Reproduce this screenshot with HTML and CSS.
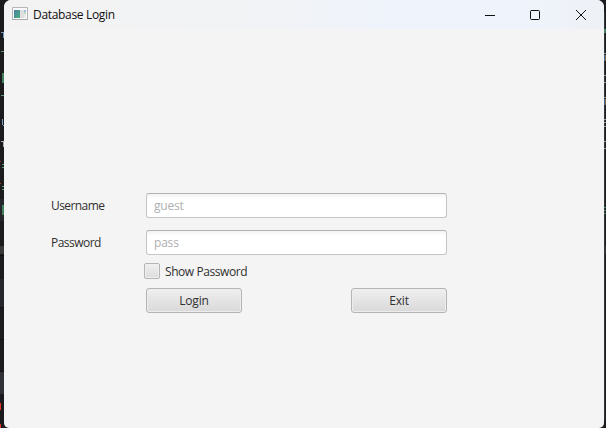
FILE: index.html
```html
<!DOCTYPE html>
<html lang="en">
<head>
<meta charset="utf-8">
<title>Database Login</title>
<link rel="stylesheet" href="styles.css">
</head>
<body>
<svg class="edge" width="4" height="428" viewBox="0 0 4 428" shape-rendering="crispEdges">
  <path fill="#1b1b1d" d="M0 0h4v428H0z"/>
  <path fill="#25262b" d="M0 199h4v22H0zM0 279h4v28H0z"/>
  <path fill="#393939" d="M0 246h4v8H0z"/>
  <path fill="#303137" d="M0 372h4v22H0z"/>
  <path fill="#101012" d="M0 255h4v1H0zM0 307h4v1H0zM0 339h4v1H0zM0 371h4v1H0z"/>
  <path fill="#7698bb" d="M1 32h3v1H1zM3 33h1v5H3zM2 119h1v6H2zM3 125h1v1H3z"/>
  <path fill="#a8b0b8" d="M1 141h3v1H1zM3 142h1v5H3z"/>
  <path fill="#5a9a76" d="M1 51h3v1H1zM1 95h3v1H1zM2 164h2v1H2zM2 167h2v1H2zM2 186h2v1H2zM2 189h2v1H2z"/>
  <path fill="#3f7d5b" d="M2 73h2v10H2zM2 205h2v10H2z"/>
  <path fill="#a33b28" d="M0 161h1v1H0zM0 183h1v1H0z"/>
  <path fill="#e33427" d="M0 403h1v7H0zM0 424h1v4H0z"/>
</svg>
<main class="window">
  <header class="titlebar">
    <svg class="app-icon" width="16" height="14" viewBox="0 0 16 14">
      <defs><linearGradient id="pane" x1="0" y1="0" x2="1" y2="1"><stop offset="0" stop-color="#4b7fa8"/><stop offset="1" stop-color="#4eab7c"/></linearGradient></defs>
      <path fill="#fafafa" stroke="#b4b6b9" d="M.5.5h15v12H.5z"/>
      <path fill="#a7abb0" d="M0 12h16v1H0z"/>
      <path fill="url(#pane)" d="M2 3h6v8H2z"/>
      <path fill="#dededf" d="M8 3h4v8H8z"/>
      <path fill="#9fbfdb" d="M12 3h2v2h-2z"/>
      <path fill="#b9dbc8" d="M12 5h2v2h-2z"/>
      <path fill="#e7e9ea" d="M12 7h2v4h-2z"/>
    </svg>
    <span class="title">Database Login</span>
    <svg class="controls" width="104" height="12" viewBox="0 0 104 12" fill="none" stroke="#111">
      <path d="M1 6.500h10M47 1.500h7.500a1 1 0 0 1 1 1v7a1 1 0 0 1-1 1H47.500a1 1 0 0 1-1-1v-7a1 1 0 0 1 1-1zM92 1l10 10M102 1L92 11"/>
    </svg>
  </header>
  <form class="login">
    <label class="label username" for="user">Username</label>
    <input class="field" id="user" type="text" placeholder="guest">
    <label class="label password" for="pass">Password</label>
    <input class="field" id="pass" type="password" placeholder="pass">
    <label class="show"><input class="check" type="checkbox"><span>Show Password</span></label>
    <div class="actions">
      <button class="button" type="button">Login</button>
      <button class="button" type="button">Exit</button>
    </div>
  </form>
</main>
<svg class="edge" width="2" height="428" viewBox="0 0 2 428" shape-rendering="crispEdges">
  <path fill="#1b1e21" d="M0 0h2v428H0z"/>
  <path fill="#34383d" d="M0 12h1v408H0z"/>
  <path fill="#34383b" d="M1 246h1v8H1z"/>
  <path fill="#4c7f60" d="M0 29h2v4H0zM0 207h2v1H0zM0 210h2v1H0zM0 213h2v1H0z"/>
  <path fill="#3e6595" d="M0 55h1v6H0zM0 99h1v6H0z"/>
  <path fill="#816346" d="M1 55h1v6H1zM1 99h1v6H1z"/>
  <path fill="#92979b" d="M0 53h2v1H0zM0 75h2v1H0zM0 82h2v1H0zM0 97h2v1H0zM0 119h2v1H0zM0 122h2v1H0zM0 126h2v1H0zM0 141h2v1H0zM0 148h2v1H0z"/>
</svg>
</body>
</html>
```
FILE: styles.css
```css
* { box-sizing: border-box; }

body {
  display: flex;
  width: 606px;
  height: 428px;
  margin: 0;
  overflow: hidden;
  background: #1b1b1d;
  color: #303030;
  font: 12px/16px "Open Sans", "Noto Sans", sans-serif;
}

.edge { display: block; flex: none; }

.window {
  width: 600px;
  height: 428px;
  overflow: hidden;
  border-radius: 7px 7px 5px 5px;
  background: #f4f4f4;
}

.titlebar {
  display: flex;
  align-items: center;
  height: 29px;
  padding: 0 16px 0 8px;
  background: linear-gradient(90deg, #f3f3f3 0%, #f2f3f5 38%, #eff3fb 65%, #eff3fb 85%, #eef2f7 100%);
}

.app-icon { margin-top: -1px; }

.title {
  margin-left: 5px;
  color: #111;
  letter-spacing: -0.32px;
}

.controls { margin-left: auto; }

.login {
  display: grid;
  grid-template-columns: 95px 301px;
  grid-template-rows: 25px 12px 25px 8px 16px 9px 25px;
  margin: 164px 0 0 47px;
}

.label { grid-column: 1; line-height: 25px; }
.username, #user { grid-row: 1; }
.password, #pass { grid-row: 3; }
.username { letter-spacing: -0.58px; }
.password { letter-spacing: -0.53px; }

.field {
  grid-column: 2;
  width: 301px;
  height: 25px;
  margin: 0;
  padding: 0 7px;
  border: 1px solid #c5c5c5;
  border-top-color: #b3b3b3;
  border-radius: 3px;
  outline: none;
  background: linear-gradient(#f3f3f3, #fff 5px);
  color: #303030;
  font: inherit;
  letter-spacing: -0.2px;
}

.field::placeholder { color: #afafaf; opacity: 1; }

.show {
  display: flex;
  grid-column: 2;
  grid-row: 5;
  gap: 5px;
  margin-left: -2px;
  line-height: 17px;
  letter-spacing: -0.43px;
}

.check {
  width: 16px;
  height: 16px;
  margin: 0;
  appearance: none;
  border: 1px solid #b4b4b4;
  border-radius: 2px;
  background: linear-gradient(#f0f0f0, #dcdcdc);
  box-shadow: inset 0 0 0 1px #f1f1f1;
}

.actions {
  display: flex;
  grid-column: 2;
  grid-row: 7;
  justify-content: space-between;
}

.button {
  width: 96px;
  height: 25px;
  padding: 0;
  border: 1px solid #b4b4b4;
  border-radius: 3px;
  background: linear-gradient(#efefef, #d9d9d9);
  box-shadow: inset 0 0 0 1px #ededed;
  color: #303030;
  font: inherit;
  letter-spacing: -0.15px;
}
```
